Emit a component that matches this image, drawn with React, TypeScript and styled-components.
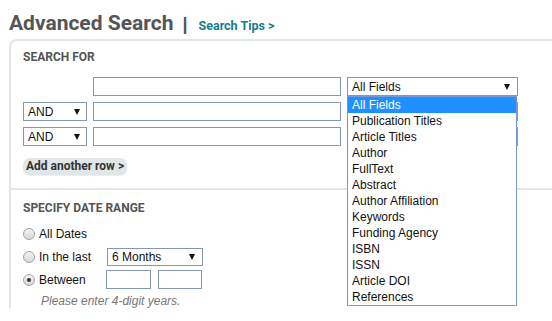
import React from 'react';
import styled, { createGlobalStyle } from 'styled-components';

const GlobalStyle = createGlobalStyle`
  html, body {
    margin: 0;
    padding: 0;
    background: #fff;
    overflow: hidden;
  }
  body {
    font-family: "Liberation Sans", Arial, sans-serif;
    font-size: 12px;
    color: #111;
  }
`;

const fields = [
  'All Fields',
  'Publication Titles',
  'Article Titles',
  'Author',
  'FullText',
  'Abstract',
  'Author Affiliation',
  'Keywords',
  'Funding Agency',
  'ISBN',
  'ISSN',
  'Article DOI',
  'References',
];

const App: React.FC = () => {
  return (
    <>
      <GlobalStyle />
      <Page>
        <Header>
          <Title>Advanced Search</Title>
          <Bar>|</Bar>
          <TipsLink href="#">Search Tips &gt;</TipsLink>
        </Header>
        <Panel>
          <Section $divider>
            <SectionTitle>Search For</SectionTitle>
            <TermGrid>
              <span />
              <TextBox />
              <SelectCell>
                <SelectBox $padRight={7}>All Fields</SelectBox>
                <FieldList>
                  {fields.map((f, i) => (
                    <FieldItem key={f} $active={i === 0}>
                      {f}
                    </FieldItem>
                  ))}
                </FieldList>
              </SelectCell>

              <SelectBox $padRight={6}>AND</SelectBox>
              <TextBox />
              <SelectBox $padRight={7}>All Fields</SelectBox>

              <SelectBox $padRight={6}>AND</SelectBox>
              <TextBox />
              <SelectBox $padRight={7}>All Fields</SelectBox>
            </TermGrid>
            <AddRowButton>Add another row &gt;</AddRowButton>
          </Section>

          <Section>
            <SectionTitle $gap={7}>Specify Date Range</SectionTitle>
            <RadioRow>
              <RadioLabel>
                <Radio />
                All Dates
              </RadioLabel>
            </RadioRow>
            <RadioRow>
              <RadioLabel>
                <Radio />
                In the last
              </RadioLabel>
              <SelectBox $padRight={7} $width={96} $height={18} $offset={1}>
                6 Months
              </SelectBox>
            </RadioRow>
            <RadioRow>
              <RadioLabel>
                <Radio $checked />
                Between
              </RadioLabel>
              <YearInputs>
                <TextBox $width={45} />
                <TextBox $width={44} />
              </YearInputs>
            </RadioRow>
            <Hint>Please enter 4-digit years.</Hint>
          </Section>
        </Panel>
      </Page>
    </>
  );
};

const Page = styled.div`
  width: 552px;
  height: 321px;
  padding-left: 9px;
  box-sizing: border-box;
  overflow: hidden;
`;

const Header = styled.div`
  display: flex;
  align-items: baseline;
  height: 39px;
  padding-top: 11px;
  box-sizing: border-box;
`;

const Title = styled.h1`
  margin: 0;
  font-family: Roboto, "Liberation Sans", sans-serif;
  font-size: 21px;
  line-height: 24px;
  font-weight: 700;
  color: #555;
`;

const Bar = styled.span`
  margin: 0 11px 0 9px;
  font-family: "Liberation Sans", sans-serif;
  font-size: 18px;
  font-weight: 700;
  color: #555;
`;

const TipsLink = styled.a`
  font-family: Roboto, "Liberation Sans", sans-serif;
  font-size: 12.5px;
  font-weight: 700;
  color: #177c8c;
  text-decoration: none;
`;

const Panel = styled.div`
  margin-right: -20px;
  border-top: 2px solid #e2e7e9;
  border-left: 2px solid #e2e7e9;
  border-top-left-radius: 8px;
`;

const Section = styled.div<{ $divider?: boolean }>`
  padding: ${(p) => (p.$divider ? '9px 0 13px 12px' : '11px 0 0 12px')};
  border-bottom: ${(p) => (p.$divider ? '2px solid #e2e7e9' : 'none')};
`;

const SectionTitle = styled.div<{ $gap?: number }>`
  font-family: Roboto, "Liberation Sans", sans-serif;
  font-size: 12px;
  line-height: 14px;
  font-weight: 700;
  text-transform: uppercase;
  color: #555;
  margin-bottom: ${(p) => p.$gap ?? 13}px;
`;

const TermGrid = styled.div`
  display: grid;
  grid-template-columns: 64px 248px 171px;
  grid-auto-rows: 19px;
  column-gap: 6px;
  row-gap: 6px;
`;

const TextBox = styled.div<{ $width?: number }>`
  width: ${(p) => (p.$width ? `${p.$width}px` : 'auto')};
  height: 19px;
  box-sizing: border-box;
  border: 1px solid #8298b6;
  background: #fff;
`;

const SelectCell = styled.div`
  position: relative;
  display: flex;
  flex-direction: column;
`;

const SelectBox = styled.div<{
  $padRight: number;
  $width?: number;
  $height?: number;
  $offset?: number;
}>`
  display: flex;
  align-items: center;
  justify-content: space-between;
  width: ${(p) => (p.$width ? `${p.$width}px` : 'auto')};
  height: ${(p) => p.$height ?? 19}px;
  margin-left: ${(p) => p.$offset ?? 0}px;
  box-sizing: border-box;
  padding: 0 ${(p) => p.$padRight}px 0 4px;
  border: 1px solid #8298b6;
  background: #fff;
  font-size: 12px;
  color: #111;

  &::after {
    content: '';
    border-left: 3.5px solid transparent;
    border-right: 3.5px solid transparent;
    border-top: 6px solid #111;
  }
`;

const FieldList = styled.div`
  position: absolute;
  top: 19px;
  left: 0;
  z-index: 10;
  width: 170px;
  box-sizing: border-box;
  border: 1px solid #7a98d2;
  background: #fff;
`;

const FieldItem = styled.div<{ $active?: boolean }>`
  height: 16px;
  line-height: 16px;
  padding-left: 4px;
  font-size: 12px;
  white-space: nowrap;
  color: ${(p) => (p.$active ? '#fff' : '#111')};
  background: ${(p) => (p.$active ? '#1e90ff' : 'transparent')};
`;

const AddRowButton = styled.button`
  display: inline-block;
  margin-top: 12px;
  height: 17px;
  padding: 0 3px;
  border: none;
  border-radius: 7px;
  background: #e1e6e9;
  box-shadow: 0 1px 1px rgba(0, 0, 0, 0.08);
  font-family: Roboto, "Liberation Sans", sans-serif;
  font-size: 12px;
  line-height: 17px;
  font-weight: 700;
  color: #333;
  cursor: pointer;
`;

const RadioRow = styled.div`
  display: grid;
  grid-template-columns: 83px auto;
  align-items: center;
  height: 23px;
`;

const RadioLabel = styled.label`
  display: flex;
  align-items: center;
  gap: 4px;
  font-size: 12px;
  color: #111;
`;

const Radio = styled.span<{ $checked?: boolean }>`
  position: relative;
  width: 12px;
  height: 12px;
  box-sizing: border-box;
  border-radius: 50%;
  border: 1px solid #a3a3a3;
  background: linear-gradient(#f4f4f4, #d8d8d8);

  &::after {
    content: '';
    display: ${(p) => (p.$checked ? 'block' : 'none')};
    position: absolute;
    left: 3px;
    top: 3px;
    width: 4px;
    height: 4px;
    border-radius: 50%;
    background: #333;
  }
`;

const YearInputs = styled.div`
  display: flex;
  gap: 7px;
`;

const Hint = styled.div`
  margin-top: 3px;
  padding-left: 18px;
  font-size: 12px;
  line-height: 14px;
  font-style: italic;
  color: #777;
`;

export default App;
